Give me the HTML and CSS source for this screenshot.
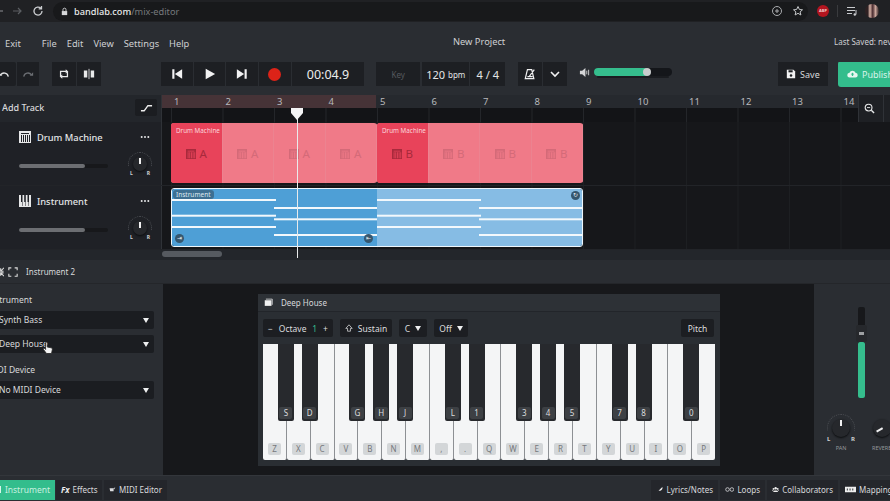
FILE: index.html
```html
<!DOCTYPE html>
<html lang="en">
<head>
    <meta charset="UTF-8">
    <title>New Project - BandLab Mix Editor</title>
    <link rel="stylesheet" href="styles.css">
</head>
<body>
    <svg class="defs" xmlns="http://www.w3.org/2000/svg">
        <symbol id="i-drum" viewBox="0 0 12 12"><path fill="currentColor" fill-rule="evenodd" d="M0 0h12v12H0zM2 4v7h1V4zM4 4v7h1V4zM6 4v7h1V4zM8 4v7h1V4zM10 4v7h1V4zM2 2v1h8V2z"/></symbol>
        <symbol id="i-keys" viewBox="0 0 12 12"><path fill="currentColor" fill-rule="evenodd" d="M0 0h12v12H0zM2 0v7h1.5V0zM5.2 0v7h1.6V0zM8.5 0v7H10V0zM3 7v4h.5V7zM6 7v4h.5V7zM9 7v4h.5V7z"/></symbol>
        <symbol id="i-dots" viewBox="0 0 12 4"><circle cx="2" cy="2" r="1.2" fill="currentColor"/><circle cx="6" cy="2" r="1.2" fill="currentColor"/><circle cx="10" cy="2" r="1.2" fill="currentColor"/></symbol>
    </svg>

    <header class="browser-bar">
        <svg class="nav-icon back" viewBox="0 0 12 12"><path d="M10 6H2M5 3L2 6l3 3" fill="none" stroke="#8d9094" stroke-width="1.2"/></svg>
        <svg class="nav-icon forward" viewBox="0 0 12 12"><path d="M2 6h8M7 3l3 3-3 3" fill="none" stroke="#5c5f63" stroke-width="1.2"/></svg>
        <svg class="nav-icon reload" viewBox="0 0 12 12"><path d="M10 6a4 4 0 1 1-1.2-2.8M9.5 1v2.8H6.7" fill="none" stroke="#c9cbce" stroke-width="1.3"/></svg>
        <div class="address">
            <svg class="lock" viewBox="0 0 10 10"><path d="M2 4.500h6V9H2z" fill="#d6d7d9"/><path d="M3.300 4.500V3a1.700 1.700 0 0 1 3.400 0v1.500" fill="none" stroke="#d6d7d9"/></svg>
            <span class="host">bandlab.com</span><span class="path">/mix-editor</span>
            <svg class="addr-icon first" viewBox="0 0 12 12"><circle cx="6" cy="6" r="4.5" fill="none" stroke="#a9abae"/><path d="M6 4v4M4 6h4" stroke="#a9abae"/></svg>
            <svg class="addr-icon" viewBox="0 0 12 12"><path d="M6 1.500l1.400 3 3.100.3-2.400 2.100.8 3.100L6 8.300 3.100 10l.8-3.100L1.500 4.800l3.100-.3z" fill="none" stroke="#c4c6c8"/></svg>
        </div>
        <span class="abp">ABP</span>
        <span class="bar-sep"></span>
        <svg class="nav-icon queue" viewBox="0 0 12 12"><path d="M1 2.500h8M1 5.500h8M1 8.500h5" stroke="#c9cbce" stroke-width="1.2"/><path d="M10 5v4.500" stroke="#c9cbce"/><circle cx="8.800" cy="9.500" r="1.2" fill="#c9cbce"/></svg>
        <span class="avatar"></span>
    </header>

    <nav class="menu-bar">
        <span class="menu-exit">Exit</span>
        <span class="menu-item">File</span>
        <span class="menu-item">Edit</span>
        <span class="menu-item">View</span>
        <span class="menu-item">Settings</span>
        <span class="menu-item">Help</span>
        <span class="project-name">New Project</span>
        <span class="last-saved">Last Saved: never</span>
    </nav>

    <section class="transport">
        <button class="tbtn undo"><svg viewBox="0 0 14 10"><path d="M12 8a5 5 0 0 0-9-2" fill="none" stroke="#e4e5e6" stroke-width="1.5"/><path d="M1 3v4h4z" fill="#e4e5e6"/></svg></button>
        <button class="tbtn redo"><svg viewBox="0 0 14 10"><path d="M2 8a5 5 0 0 1 9-2" fill="none" stroke="#6b6e73" stroke-width="1.5"/><path d="M13 3v4H9z" fill="#6b6e73"/></svg></button>
        <button class="tbtn loop"><svg viewBox="0 0 14 14"><path d="M3 10V4h7M11 4v6H4" fill="none" stroke="#e8e9ea" stroke-width="1.5"/><path d="M9 1.500L12 4 9 6.500zM5 7.500L2 10l3 2.500z" fill="#e8e9ea"/></svg></button>
        <button class="tbtn split"><svg viewBox="0 0 14 14"><path d="M1 3h4v8H1zM9 3h4v8H9z" fill="#e8e9ea"/><path d="M7 1v12" stroke="#e8e9ea"/></svg></button>

        <button class="tbtn play-btn skip-back"><svg viewBox="0 0 14 14"><path d="M1.500 1.500h2.500v11H1.500zM13 1.500v11L4.500 7z" fill="#f2f2f3"/></svg></button>
        <button class="tbtn play-btn"><svg viewBox="0 0 14 14"><path d="M2 1l11 6-11 6z" fill="#f2f2f3"/></svg></button>
        <button class="tbtn play-btn"><svg viewBox="0 0 14 14"><path d="M10 1.500h2.500v11H10zM1 1.500v11L9.500 7z" fill="#f2f2f3"/></svg></button>
        <button class="tbtn play-btn"><span class="rec-dot"></span></button>
        <div class="tbtn timer">00:04.9</div>

        <div class="tbtn key-btn">Key</div>
        <div class="tbtn bpm-btn">120 <small>bpm</small></div>
        <div class="tbtn sig-btn">4 / 4</div>

        <button class="tbtn metro"><svg viewBox="0 0 14 14"><path d="M1.500 12.500L4 2h5l2.500 10.500zM4 10h6M6 10l6-8" fill="none" stroke="#f0f0f1" stroke-width="1.4"/></svg></button>
        <button class="tbtn chev"><svg viewBox="0 0 12 8"><path d="M2 2l4 4 4-4" fill="none" stroke="#f0f0f1" stroke-width="1.6"/></svg></button>

        <svg class="vol-icon" viewBox="0 0 12 12"><path d="M1 4h2.500L7 1v10L3.500 8H1z" fill="#d4d5d7"/><path d="M8.500 4v4M10.500 3v6" stroke="#d4d5d7"/></svg>
        <div class="vol-slider"><span class="vol-fill"></span><span class="vol-knob"></span></div>

        <button class="tbtn save"><svg viewBox="0 0 12 12"><path d="M1 1h8l2 2v8H1z" fill="#f2f2f3"/><path d="M3 1.500h5v2.500H3z" fill="#1d1f23"/><circle cx="6" cy="7.800" r="1.5" fill="#1d1f23"/></svg>Save</button>
        <button class="publish"><svg viewBox="0 0 14 10"><path d="M3.500 9.500a3 3 0 0 1-.3-6 4 4 0 0 1 7.600 0 3 3 0 0 1-.3 6z" fill="#e6f7f0"/><path d="M7 3L4.800 5.500h1.400v2h1.600v-2h1.400z" fill="#33bd8c"/></svg>Publish</button>
    </section>

    <section class="arranger">
        <div class="ruler-row">
            <div class="add-track">
                <span>Add Track</span>
                <span class="automation"><svg viewBox="0 0 14 8"><path d="M1 7h3.500l4-5.500H13" fill="none" stroke="#eee" stroke-width="1.5"/></svg></span>
            </div>
            <div class="ruler">
                <div class="ruler-nums">
                    <span class="bar">1</span><span class="bar">2</span><span class="bar">3</span><span class="bar">4</span>
                    <span class="bar">5</span><span class="bar">6</span><span class="bar">7</span><span class="bar">8</span><span class="bar">9</span>
                    <span class="bar">10</span><span class="bar">11</span><span class="bar">12</span><span class="bar">13</span><span class="bar">14</span>
                </div>
                <div class="ruler-ticks"></div>
            </div>
            <div class="zoom-btn"><svg viewBox="0 0 12 12"><circle cx="5" cy="5" r="3.700" fill="none" stroke="#e8e9ea" stroke-width="1.2"/><path d="M8 8l3 3" stroke="#e8e9ea" stroke-width="1.5"/><path d="M3.300 5h3.400" stroke="#e8e9ea"/></svg></div>
        </div>

        <div class="track-row">
            <div class="track-head">
                <div class="track-title">
                    <svg class="track-icon"><use href="#i-drum"/></svg>
                    <span class="track-name">Drum Machine</span>
                    <svg class="dots"><use href="#i-dots"/></svg>
                </div>
                <div class="track-controls">
                    <div class="track-vol"><span></span></div>
                    <div class="knob small"><i></i><b class="l">L</b><b class="r">R</b></div>
                </div>
            </div>
            <div class="lane">
                <div class="drum-clip">
                    <div class="drum-cell lead"><em>Drum Machine</em><svg><use href="#i-drum"/></svg>A</div>
                    <div class="drum-cell"><svg><use href="#i-drum"/></svg>A</div>
                    <div class="drum-cell"><svg><use href="#i-drum"/></svg>A</div>
                    <div class="drum-cell"><svg><use href="#i-drum"/></svg>A</div>
                </div>
                <div class="drum-clip">
                    <div class="drum-cell lead"><em>Drum Machine</em><svg><use href="#i-drum"/></svg>B</div>
                    <div class="drum-cell"><svg><use href="#i-drum"/></svg>B</div>
                    <div class="drum-cell"><svg><use href="#i-drum"/></svg>B</div>
                    <div class="drum-cell"><svg><use href="#i-drum"/></svg>B</div>
                </div>
            </div>
        </div>

        <div class="track-row">
            <div class="track-head">
                <div class="track-title">
                    <svg class="track-icon"><use href="#i-keys"/></svg>
                    <span class="track-name">Instrument</span>
                    <svg class="dots"><use href="#i-dots"/></svg>
                </div>
                <div class="track-controls">
                    <div class="track-vol"><span></span></div>
                    <div class="knob small"><i></i><b class="l">L</b><b class="r">R</b></div>
                </div>
            </div>
            <div class="lane">
                <div class="inst-clip">
                    <svg class="notes" viewBox="0 0 410 57">
                        <rect width="205" height="57" fill="#4e9fd6"/>
                        <rect x="205" width="205" height="57" fill="#86bce4"/>
                        <g fill="#f2f8fc">
                            <rect x="0" y="10" width="104" height="2"/><rect x="102" y="18" width="103" height="2"/>
                            <rect x="0" y="25.7" width="104" height="2"/><rect x="102" y="29.3" width="103" height="2"/>
                            <rect x="0" y="37" width="104" height="2"/><rect x="102" y="45" width="103" height="2"/>
                            <rect x="205" y="10" width="104" height="2"/><rect x="307" y="18" width="103" height="2"/>
                            <rect x="205" y="25.7" width="104" height="2"/><rect x="307" y="29.3" width="103" height="2"/>
                            <rect x="205" y="37" width="104" height="2"/><rect x="307" y="45" width="103" height="2"/>
                        </g>
                    </svg>
                    <span class="inst-label">Instrument</span>
                    <span class="clip-handle h-start">&#8677;</span>
                    <span class="clip-handle h-mid">&#8676;</span>
                    <span class="clip-handle h-end">&#8635;</span>
                </div>
            </div>
        </div>

        <div class="scroll-row"><span class="scroll-thumb"></span></div>

        <div class="playhead"><svg viewBox="0 0 12 12"><path d="M0 0h12v5l-6 7-6-7z" fill="#f4f4f5"/></svg></div>
    </section>

    <section class="panel-head">
        <svg class="collapse" viewBox="0 0 12 12"><path d="M12 1L8 5M8 1.500V5h3.500M12 11L8 7M8 10.500V7h3.500" fill="none" stroke="#ddd" stroke-width="1.3"/></svg>
        <svg class="expand" viewBox="0 0 12 12"><path d="M1 4V1h3M8 1h3v3M11 8v3H8M4 11H1V8" fill="none" stroke="#ddd" stroke-width="1.3"/></svg>
        <span>Instrument 2</span>
    </section>

    <main class="panel">
        <aside class="side">
            <label class="side-label">Instrument</label>
            <div class="select">Synth Bass</div>
            <div class="select">Deep House</div>
            <label class="side-label midi">MIDI Device</label>
            <div class="select">No MIDI Device</div>
            <svg class="cursor" viewBox="0 0 12 14"><path d="M3.500 1.500c.8-.8 1.700 0 1.700.8V6l4 .8c1 .3 1.300 1 1.100 2l-.8 3.700H4.500L1.500 8.500c-.5-.8.400-1.600 1.100-1l1 1z" fill="#f4f4f4" stroke="#222" stroke-width=".8"/></svg>
        </aside>

        <div class="stage">
            <div class="piano-card">
                <div class="piano-title">
                    <svg viewBox="0 0 12 12"><path d="M1 3h9v7.500H1z" fill="#f0f0f1"/><path d="M2.500 1.500H11V9" fill="none" stroke="#f0f0f1"/></svg>
                    <span>Deep House</span>
                </div>
                <div class="piano-tools">
                    <div class="tool octave"><span>&minus;</span><span>Octave</span><span class="oct-num">1</span><span>+</span></div>
                    <div class="tool sustain"><svg viewBox="0 0 10 10"><path d="M5 1L1 5.500h2.200V9h3.600V5.500H9z" fill="none" stroke="#e4e5e6" stroke-width=".9"/></svg>Sustain</div>
                    <div class="tool drop">C</div>
                    <div class="tool drop">Off</div>
                    <div class="tool pitch">Pitch</div>
                </div>
                <div class="keys">
                    <div class="key"><kbd>Z</kbd><div class="black"><kbd>S</kbd></div></div>
                    <div class="key"><kbd>X</kbd><div class="black"><kbd>D</kbd></div></div>
                    <div class="key"><kbd>C</kbd></div>
                    <div class="key"><kbd>V</kbd><div class="black"><kbd>G</kbd></div></div>
                    <div class="key"><kbd>B</kbd><div class="black"><kbd>H</kbd></div></div>
                    <div class="key"><kbd>N</kbd><div class="black"><kbd>J</kbd></div></div>
                    <div class="key"><kbd>M</kbd></div>
                    <div class="key"><kbd>,</kbd><div class="black"><kbd>L</kbd></div></div>
                    <div class="key"><kbd>.</kbd><div class="black"><kbd>1</kbd></div></div>
                    <div class="key"><kbd>Q</kbd></div>
                    <div class="key"><kbd>W</kbd><div class="black"><kbd>3</kbd></div></div>
                    <div class="key"><kbd>E</kbd><div class="black"><kbd>4</kbd></div></div>
                    <div class="key"><kbd>R</kbd><div class="black"><kbd>5</kbd></div></div>
                    <div class="key"><kbd>T</kbd></div>
                    <div class="key"><kbd>Y</kbd><div class="black"><kbd>7</kbd></div></div>
                    <div class="key"><kbd>U</kbd><div class="black"><kbd>8</kbd></div></div>
                    <div class="key"><kbd>I</kbd></div>
                    <div class="key"><kbd>O</kbd><div class="black"><kbd>0</kbd></div></div>
                    <div class="key"><kbd>P</kbd></div>
                </div>
            </div>
        </div>

        <aside class="mixer">
            <div class="fader"><span class="fader-fill"></span><span class="fader-cap"></span></div>
            <div class="mixer-knobs">
                <div class="mix-knob">
                    <div class="knob large"><i></i><b class="l">L</b><b class="r">R</b></div>
                    <span>PAN</span>
                </div>
                <div class="mix-knob reverb">
                    <div class="knob large"><i></i></div>
                    <span>REVERB</span>
                </div>
            </div>
        </aside>
    </main>

    <footer class="tabs">
        <span class="tab active"><i class="tab-square"></i>Instrument</span>
        <span class="tab effects"><b>Fx</b>Effects</span>
        <span class="tab midi"><svg viewBox="0 0 12 10"><path d="M1 3h7v5H2zM8 3l3-2-2 4z" fill="#dcdddf"/></svg>MIDI Editor</span>
        <span class="tab lyrics"><svg viewBox="0 0 12 12"><path d="M2 10L10 2c1 2 0 5-3 6H4z" fill="#eee"/></svg>Lyrics/Notes</span>
        <span class="tab loops"><svg viewBox="0 0 12 8"><circle cx="3.200" cy="4" r="2.300" fill="none" stroke="#dcdddf"/><circle cx="8.800" cy="4" r="2.300" fill="none" stroke="#dcdddf"/></svg>Loops</span>
        <span class="tab collab"><svg viewBox="0 0 12 10"><circle cx="6" cy="3" r="2" fill="#eee"/><circle cx="2.500" cy="4" r="1.5" fill="#eee"/><circle cx="9.500" cy="4" r="1.5" fill="#eee"/><path d="M2 9c0-3 8-3 8 0zM0 8c0-2 2-2.500 3-2zM12 8c0-2-2-2.500-3-2z" fill="#eee"/></svg>Collaborators</span>
        <span class="tab"><svg viewBox="0 0 12 8"><path d="M0 1h12v6H0z" fill="#eee"/><path d="M2 3h1v2H2zM5 3h1v2H5zM8 3h1v2H8z" fill="#23262b"/></svg>Mapping</span>
    </footer>
</body>
</html>
```

FILE: styles.css
```css
* {
    margin: 0;
    padding: 0;
    box-sizing: border-box;
}

body {
    position: relative;
    width: 890px;
    height: 501px;
    overflow: hidden;
    display: flex;
    flex-direction: column;
    font-family: "Noto Sans", sans-serif;
    background-color: #2a2d32;
    color: #d8d9db;
}

.defs {
    display: none;
}

button {
    border: none;
    font-family: inherit;
}

/* browser chrome */
.browser-bar {
    flex: 0 0 22px;
    display: flex;
    align-items: center;
    background-color: #202124;
    overflow: hidden;
}

.nav-icon {
    width: 12px;
    height: 12px;
    flex: none;
}

.back {
    margin-left: -7px;
}

.forward {
    margin-left: 6px;
}

.reload {
    margin-left: 9px;
}

.address {
    flex: 0 0 755px;
    height: 19px;
    margin-left: 9px;
    display: flex;
    align-items: center;
    background-color: #18191b;
    border-radius: 10px;
    font-size: 9.2px;
}

.lock {
    width: 9px;
    height: 9px;
    margin: 0 5px 0 7px;
}

.host {
    color: #e8e9ea;
    font-weight: 500;
}

.path {
    color: #77797d;
}

.addr-icon {
    width: 12px;
    height: 12px;
    margin-left: 9px;
}

.addr-icon.first {
    margin-left: auto;
}

.address .addr-icon:last-child {
    margin-right: 4px;
}

.abp {
    width: 12px;
    height: 12px;
    margin-left: 9px;
    border-radius: 50%;
    background-color: #b3151f;
    color: #f0d0d0;
    font-size: 4px;
    font-weight: 700;
    line-height: 12px;
    text-align: center;
}

.bar-sep {
    width: 1px;
    height: 12px;
    margin: 0 8px;
    background-color: #3a3b3e;
}

.avatar {
    width: 14px;
    height: 14px;
    margin-left: 7px;
    border-radius: 50%;
    background: linear-gradient(90deg, #2d2022 20%, #d8b4a8 35%, #4a2c30 55%, #caa69c 75%, #2d2022);
}

/* menu */
.menu-bar {
    flex: 0 0 40px;
    position: relative;
    display: flex;
    align-items: center;
    padding: 2px 0 0 5px;
    font-size: 9.3px;
    color: #cfd0d2;
    background-color: #2a2d32;
}

.menu-exit {
    margin-right: 21px;
}

.menu-item {
    margin-right: 10px;
}

.project-name {
    position: absolute;
    left: 453px;
    top: 13px;
}

.last-saved {
    position: absolute;
    left: 834px;
    top: 14px;
    font-size: 8px;
    white-space: nowrap;
}

/* transport */
.transport {
    flex: 0 0 33px;
    display: flex;
    align-items: flex-start;
    background-color: #2a2d32;
}

.tbtn {
    height: 24px;
    display: flex;
    align-items: center;
    justify-content: center;
    background-color: #1d1f23;
    margin-right: 1px;
    flex: none;
}

.tbtn svg {
    width: 12px;
    height: 12px;
}

.undo {
    width: 16px;
    margin-right: 1px;
    border-radius: 0 2px 2px 0;
}

.undo svg {
    margin-left: -8px;
}

.redo {
    width: 22px;
    margin-right: 13px;
}

.loop,
.split {
    width: 24px;
}

.split {
    margin-right: 0;
}

.skip-back {
    margin-left: 60px;
}

.play-btn {
    width: 31.7px;
}

.rec-dot {
    width: 13px;
    height: 13px;
    border-radius: 50%;
    background-color: #dc2318;
}

.timer {
    width: 72.5px;
    margin-right: 12px;
    font-size: 12.5px;
    color: #eceded;
}

.key-btn {
    width: 44px;
    margin-right: 2px;
    font-size: 8px;
    color: #56595e;
}

.bpm-btn {
    width: 47px;
    margin-right: 1px;
    font-size: 11px;
    gap: 3px;
    color: #e4e5e6;
}

.bpm-btn small {
    font-size: 8px;
}

.sig-btn {
    width: 35px;
    margin-right: 13px;
    font-size: 11px;
    color: #e4e5e6;
}

.metro,
.chev {
    width: 24px;
}

.chev {
    margin-right: 11.7px;
}

.vol-icon {
    width: 11px;
    height: 11px;
    margin: 5px 4px 0 0;
    flex: none;
}

.vol-slider {
    position: relative;
    flex: 0 0 78px;
    height: 8px;
    margin: 6px 0 0;
    border-radius: 4px;
    background-color: #14161a;
    box-shadow: 0 5px 0 -3px #1a1c20;
}

.vol-fill {
    display: block;
    width: 54px;
    height: 8px;
    border-radius: 4px;
    background-color: #35bd8d;
}

.vol-knob {
    position: absolute;
    left: 49px;
    top: 0;
    width: 8px;
    height: 8px;
    border-radius: 50%;
    background-color: #c9cccd;
}

.save {
    width: 50px;
    margin-left: 106px;
    gap: 4px;
    font-size: 9px;
    color: #d8d9db;
}

.save svg {
    width: 10px;
    height: 10px;
}

.publish {
    flex: 0 0 60px;
    height: 26px;
    margin: -1px 0 0 9px;
    display: flex;
    align-items: center;
    gap: 4px;
    padding-left: 9px;
    border-radius: 3px;
    background-color: #33bd8c;
    color: #d9f4ea;
    font-size: 9px;
}

.publish svg {
    width: 11px;
    height: 8px;
}

/* arranger */
.arranger {
    flex: 0 0 165px;
    position: relative;
    display: flex;
    flex-direction: column;
    background-color: #16171a;
}

.ruler-row {
    flex: 0 0 27px;
    display: flex;
    background-color: #23262b;
}

.add-track {
    flex: 0 0 162px;
    display: flex;
    align-items: center;
    justify-content: space-between;
    padding: 0 4px 2px 2px;
    font-size: 9px;
    font-weight: 500;
    border-right: 1px solid #2f3237;
}

.automation {
    width: 22px;
    height: 17px;
    display: flex;
    align-items: center;
    justify-content: center;
    background-color: #1b1d21;
    border-radius: 2px;
}

.automation svg {
    width: 13px;
    height: 8px;
}

.ruler {
    flex: 1;
    min-width: 0;
}

.ruler-nums {
    height: 13px;
    display: flex;
    padding-left: 11px;
    font-size: 9.5px;
    line-height: 13px;
    color: #b8b9bc;
    background: linear-gradient(90deg, #463337 214px, #26292e 214px);
}

.bar {
    flex: 0 0 51.5px;
    padding-left: 1px;
}

.ruler-ticks {
    height: 14px;
    background-color: #131417;
    background-image: linear-gradient(90deg, #24262a 1px, transparent 1px);
    background-size: 51.5px 100%;
    background-position: 9px 0;
}

.zoom-btn {
    flex: 0 0 32px;
    display: flex;
    align-items: center;
    padding-left: 5px;
    background: linear-gradient(90deg, #1e2024 24px, #2f3237 24px, #2f3237 25px, #1e2024 25px);
    border-left: 1px solid #2f3237;
}

.zoom-btn svg {
    width: 11px;
    height: 11px;
}

.track-row {
    flex: 0 0 64px;
    display: flex;
    border-bottom: 1px solid #222428;
}

.track-head {
    flex: 0 0 162px;
    padding: 8px 0 0 19px;
    background-color: #1f2126;
    border-right: 1px solid #2f3237;
}

.track-title {
    display: flex;
    align-items: center;
    height: 14px;
    color: #e4e5e6;
}

.track-icon {
    width: 12px;
    height: 12px;
    margin-right: 6px;
    color: #e6e7e8;
}

.track-name {
    flex: 1;
    font-size: 9.3px;
    font-weight: 500;
}

.dots {
    width: 10px;
    height: 4px;
    margin-right: 11px;
    color: #e6e7e8;
}

.track-controls {
    display: flex;
    align-items: center;
    margin-top: 13px;
}

.track-vol {
    flex: 0 0 89px;
    height: 4px;
    margin-top: 4px;
    border-radius: 2px;
    background-color: #17181b;
}

.track-vol span {
    display: block;
    width: 66px;
    height: 4px;
    border-radius: 2px;
    background-color: #6c6e72;
}

.knob {
    position: relative;
    border-radius: 50%;
    background-color: #26282c;
    box-shadow: 0 1px 2px #0c0d0f;
}

.knob::before {
    content: "";
    position: absolute;
    inset: -5px;
    border: 1px dotted #4a4d52;
    border-radius: 50%;
    clip-path: polygon(0 0, 100% 0, 100% 60%, 50% 50%, 0 60%);
}

.knob.small {
    width: 14px;
    height: 14px;
    margin-left: 25px;
}

.knob.large {
    width: 18px;
    height: 18px;
}

.knob i {
    position: absolute;
    left: 50%;
    top: 1px;
    width: 1.5px;
    height: 6px;
    margin-left: -1px;
    background-color: #f0f0f1;
}

.knob b {
    position: absolute;
    bottom: -5px;
    font-size: 5px;
    font-weight: 700;
    color: #d0d1d3;
}

.knob .l {
    left: -3px;
}

.knob .r {
    right: -3px;
}

.large b {
    font-size: 6px;
    bottom: -6px;
}

.large .l {
    left: -5px;
}

.large .r {
    right: -5px;
}

.lane {
    flex: 1;
    display: flex;
    padding: 1px 0 0 9px;
    background-image: linear-gradient(90deg, #1d1f22 1px, transparent 1px);
    background-size: 51.5px 100%;
    background-position: 9px 0;
}

.drum-clip {
    flex: 0 0 206px;
    height: 60px;
    display: flex;
    overflow: hidden;
    border-radius: 3px;
    background-color: #f07a88;
}

.drum-cell {
    position: relative;
    flex: 1;
    display: flex;
    align-items: center;
    justify-content: center;
    gap: 4px;
    padding-top: 1px;
    font-size: 11.5px;
    color: #d46a78;
    border-right: 1px solid #ec8390;
}

.drum-cell svg {
    width: 10px;
    height: 10px;
    color: #d46a78;
}

.drum-cell.lead {
    background-color: #e8435a;
    color: #a82a3c;
}

.drum-cell.lead svg {
    color: #a82a3c;
}

.drum-cell em {
    position: absolute;
    left: 5px;
    top: 3px;
    font-size: 6.3px;
    font-style: normal;
    white-space: nowrap;
    color: #fbd5da;
}

.inst-clip {
    position: relative;
    flex: 0 0 412px;
    height: 59px;
    margin-top: 1px;
    border: 1px solid #eef6fb;
    border-radius: 3px;
    overflow: hidden;
}

.notes {
    display: block;
    width: 100%;
    height: 100%;
}

.inst-label {
    position: absolute;
    left: 1px;
    top: 1px;
    padding: 0 3px;
    border-radius: 3px;
    background-color: #3d6f92;
    color: #dfe9f0;
    font-size: 6.5px;
    line-height: 9px;
}

.clip-handle {
    position: absolute;
    width: 9px;
    height: 9px;
    border-radius: 50%;
    background-color: #35566e;
    color: #e6eef3;
    font-size: 6px;
    line-height: 9px;
    text-align: center;
}

.h-start {
    left: 3px;
    bottom: 3px;
}

.h-mid {
    left: 192px;
    bottom: 3px;
}

.h-end {
    right: 2px;
    top: 2px;
}

.scroll-row {
    flex: 1;
    padding: 1px 0 0 162px;
    background-color: #23262b;
}

.scroll-thumb {
    display: block;
    width: 60px;
    height: 6px;
    border-radius: 3px;
    background-color: #565a60;
}

.playhead {
    position: absolute;
    left: 296.5px;
    top: 13px;
    width: 1px;
    height: 150px;
    background-color: #e9eaeb;
}

.playhead svg {
    position: absolute;
    left: -6px;
    top: 0;
    width: 12px;
    height: 12px;
}

/* bottom panel */
.panel-head {
    flex: 0 0 24px;
    display: flex;
    align-items: center;
    font-size: 8px;
    background-color: #2a2d32;
    border-bottom: 1px solid #24262a;
}

.collapse {
    width: 10px;
    height: 10px;
    margin-left: -6px;
}

.expand {
    width: 10px;
    height: 10px;
    margin: 0 8px 0 4px;
}

.panel {
    flex: 0 0 191px;
    display: flex;
}

.side {
    position: relative;
    flex: 0 0 163px;
    padding: 10px 9px 0 0;
    background-color: #2a2d32;
    font-size: 8.5px;
    overflow: hidden;
}

.side-label {
    display: block;
    height: 12px;
    margin: 0 0 5px -13px;
    line-height: 12px;
}

.side-label.midi {
    margin-top: 11px;
}

.select {
    position: relative;
    height: 18px;
    margin: 0 0 6px -1px;
    line-height: 18px;
    border-radius: 2px;
    background-color: #1b1d21;
    color: #d8d9db;
}

.select::after,
.drop::after {
    content: "";
    border-left: 3px solid transparent;
    border-right: 3px solid transparent;
    border-top: 5px solid #eeeff0;
}

.select::after {
    position: absolute;
    right: 5px;
    top: 7px;
}

.cursor {
    position: absolute;
    left: 42px;
    top: 57px;
    width: 12px;
    height: 14px;
}

.stage {
    flex: 1;
    padding: 10px 0 0 95px;
    background-color: #17181b;
}

.piano-card {
    width: 462px;
    height: 172px;
    background-color: #2a2e33;
}

.piano-title {
    height: 18px;
    display: flex;
    align-items: center;
    gap: 8px;
    padding-left: 6px;
    font-size: 8px;
    background-color: #2d3136;
    border-bottom: 1px solid #22252a;
}

.piano-title svg {
    width: 9px;
    height: 9px;
}

.piano-tools {
    height: 32px;
    display: flex;
    align-items: center;
    gap: 7px;
    padding: 0 6px 0 5px;
    font-size: 8.5px;
    color: #dcdddf;
}

.tool {
    height: 18px;
    display: flex;
    align-items: center;
    border-radius: 2px;
    background-color: #1c1e22;
}

.octave {
    width: 70px;
    justify-content: space-between;
    padding: 0 5px;
}

.oct-num {
    color: #35bd8d;
}

.sustain {
    width: 52px;
    justify-content: center;
    gap: 5px;
}

.sustain svg {
    width: 8px;
    height: 8px;
}

.drop {
    justify-content: center;
    gap: 5px;
    width: 28px;
}

.drop + .drop {
    width: 34px;
}

.pitch {
    width: 33px;
    margin-left: auto;
    justify-content: center;
}

.keys {
    display: flex;
    height: 116px;
    padding: 0 5px;
}

.key {
    position: relative;
    flex: 1;
    display: flex;
    align-items: flex-end;
    justify-content: center;
    padding-bottom: 5px;
    background-color: #f4f5f6;
    border-right: 1px solid #8d9094;
    border-radius: 0 0 2px 2px;
}

.key:last-child {
    border-right: none;
}

.key kbd {
    width: 13px;
    height: 12px;
    border-radius: 2px;
    background-color: #d3d6d8;
    color: #75787c;
    font-family: inherit;
    font-size: 8px;
    line-height: 12px;
    text-align: center;
}

.black {
    position: absolute;
    left: 100%;
    top: 0;
    z-index: 1;
    width: 16px;
    height: 77px;
    margin-left: -8px;
    display: flex;
    align-items: flex-end;
    justify-content: center;
    padding-bottom: 2px;
    border-radius: 0 0 2px 2px;
    background-color: #27292d;
}

.black kbd {
    background-color: #3d4044;
    color: #dcdddf;
}

.mixer {
    flex: 0 0 76px;
    padding-top: 23px;
    background-color: #2a2d32;
    overflow: hidden;
}

.fader {
    position: relative;
    width: 7px;
    height: 91px;
    margin-left: 44px;
    border-radius: 2px;
    background-color: #17181b;
}

.fader-fill {
    position: absolute;
    left: 0;
    bottom: 0;
    width: 7px;
    height: 56px;
    border-radius: 2px;
    background-color: #35bd8d;
}

.fader-cap {
    position: absolute;
    left: -2px;
    top: 18px;
    width: 11px;
    height: 17px;
    border-radius: 2px;
    background-color: #26282c;
    background-image: linear-gradient(#9ea0a3, #9ea0a3);
    background-size: 5px 3px;
    background-position: center;
    background-repeat: no-repeat;
}

.mixer-knobs {
    display: flex;
    gap: 22px;
    margin: 21px 0 0 18px;
}

.mix-knob {
    flex: 0 0 18px;
    display: flex;
    flex-direction: column;
    align-items: center;
    gap: 7px;
    font-size: 5.5px;
    color: #96989c;
}

.reverb .knob::before {
    display: none;
}

.reverb .knob i {
    left: 3px;
    top: 10px;
    width: 7px;
    height: 1.5px;
    margin: 0;
    transform: rotate(-30deg);
}

/* tabs */
.tabs {
    flex: 1;
    display: flex;
    align-items: center;
    padding-top: 2px;
    font-size: 8px;
    background-color: #2a2d32;
    border-top: 1px solid #33363b;
    white-space: nowrap;
    overflow: hidden;
}

.tab {
    height: 20px;
    display: flex;
    align-items: center;
    gap: 3px;
    padding: 0 5px;
    margin-right: 2px;
    background-color: #24262b;
    flex: none;
}

.tab svg {
    width: 11px;
    height: 9px;
}

.tab.active {
    width: 55px;
    margin-right: 1px;
    padding-left: 0;
    background-color: #33bd8c;
    color: #c9f0e0;
    font-size: 8.5px;
    gap: 4px;
}

.tab-square {
    width: 4px;
    height: 7px;
    background-color: #d9f4ea;
}

.tab.effects {
    width: 46px;
}

.tab.effects b {
    font-style: italic;
    color: #eee;
}

.tab.midi {
    width: 63px;
}

.lyrics {
    width: 67px;
    margin-left: 482px;
}

.loops {
    width: 45px;
}

.collab {
    width: 71px;
}
```
